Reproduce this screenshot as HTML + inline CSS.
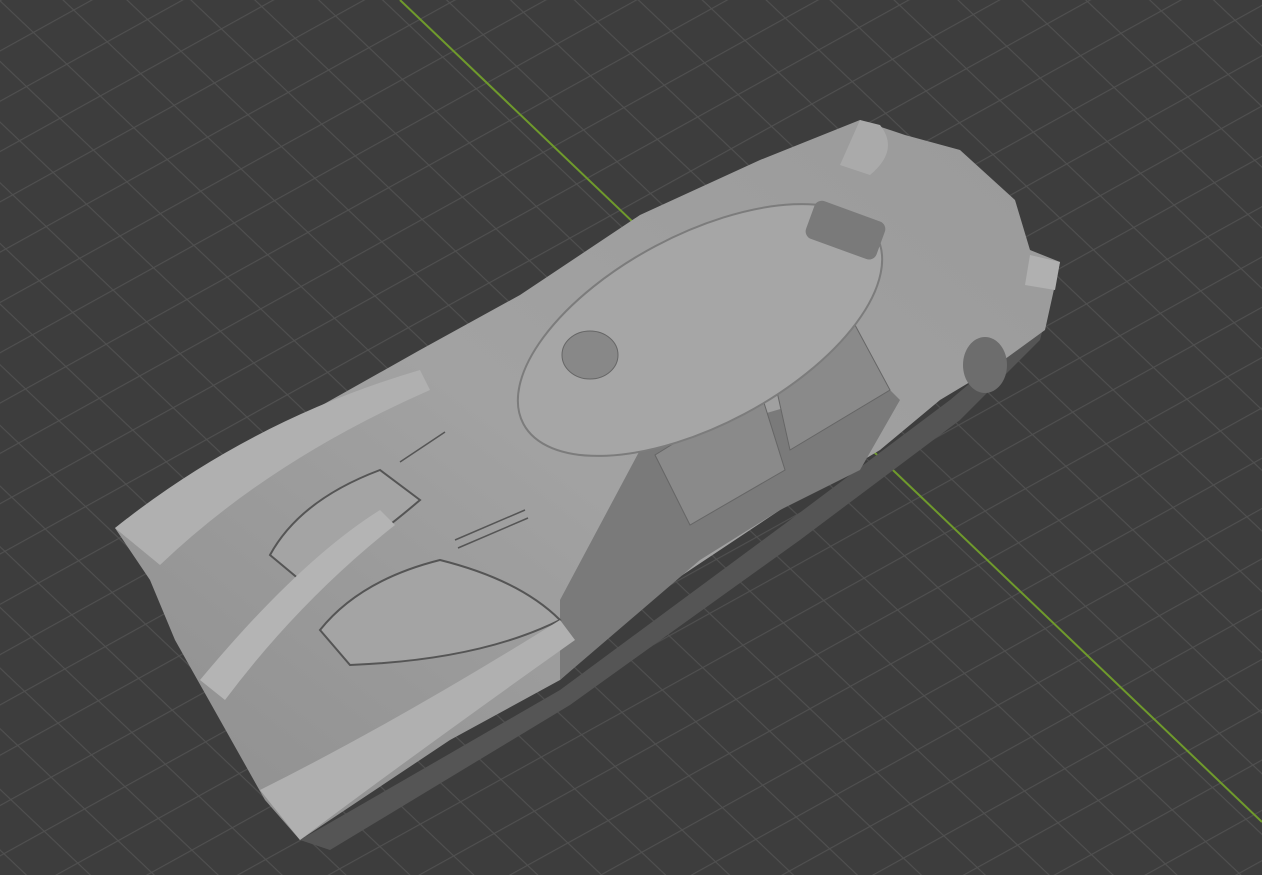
<!DOCTYPE html>
<html><head><meta charset="utf-8"><style>
html,body{margin:0;padding:0;background:#3d3d3d;width:1262px;height:875px;overflow:hidden}
</style></head><body>
<svg width="1262" height="875" viewBox="0 0 1262 875" xmlns="http://www.w3.org/2000/svg">
<defs>
<linearGradient id="body" x1="0" y1="1" x2="1" y2="0">
<stop offset="0" stop-color="#8e8e8e"/><stop offset="0.5" stop-color="#a2a2a2"/><stop offset="1" stop-color="#9a9a9a"/>
</linearGradient>
<pattern id="g1" width="44" height="44" patternUnits="userSpaceOnUse" patternTransform="rotate(43.5)">
<line x1="0" y1="0.5" x2="44" y2="0.5" stroke="#505050" stroke-width="1.2"/>
</pattern>
<pattern id="g2" width="44" height="44" patternUnits="userSpaceOnUse" patternTransform="rotate(-29)">
<line x1="0" y1="0.5" x2="44" y2="0.5" stroke="#505050" stroke-width="1.2"/>
</pattern>
</defs>
<rect width="1262" height="875" fill="#3d3d3d"/>
<rect width="1262" height="875" fill="url(#g1)"/>
<rect width="1262" height="875" fill="url(#g2)"/>
<line x1="400" y1="0" x2="1262" y2="822" stroke="#6f9a2c" stroke-width="2"/>
<polygon points="300,840 560,690 790,520 950,400 1045,320 1040,340 960,420 800,540 570,705 330,850" fill="#555"/>
<polygon points="115,528 260,440 420,350 520,295 640,215 760,160 860,120 905,135 960,150 1015,200 1030,250 1060,262 1045,330 990,370 940,400 880,450 780,510 660,590 560,680 450,740 360,800 300,840 265,800 220,720 175,640 150,580" fill="url(#body)"/>
<polygon points="560,600 640,450 880,380 900,400 860,470 780,510 700,560 560,680" fill="#7a7a7a"/>
<polygon points="655,455 760,390 785,470 690,525" fill="#8a8a8a" stroke="#666"/>
<polygon points="770,360 855,325 890,390 790,450" fill="#8a8a8a" stroke="#666"/>
<ellipse cx="700" cy="330" rx="200" ry="95" transform="rotate(-28 700 330)" fill="#a6a6a6" stroke="#7c7c7c" stroke-width="2"/>
<ellipse cx="590" cy="355" rx="28" ry="24" fill="#888" stroke="#666"/>
<path d="M270,555 Q300,500 380,470 L420,500 Q350,560 300,580 Z" fill="#a4a4a4" stroke="#555" stroke-width="2"/>
<path d="M320,630 Q360,580 440,560 Q520,580 560,620 Q480,660 350,665 Z" fill="#a4a4a4" stroke="#555" stroke-width="2"/>
<path d="M115,528 Q250,420 420,370 L430,390 Q270,460 160,565 Z" fill="#b0b0b0"/>
<path d="M260,790 Q400,720 560,620 L575,640 Q420,750 300,840 Z" fill="#b0b0b0"/>
<path d="M200,680 Q300,560 380,510 L395,525 Q300,600 225,700 Z" fill="#b4b4b4"/>
<path d="M860,120 L880,125 Q900,150 870,175 L840,165 Z" fill="#aaa"/>
<path d="M1030,255 L1060,262 L1055,290 L1025,285 Z" fill="#b0b0b0"/>
<rect x="808" y="210" width="75" height="40" rx="8" transform="rotate(20 845 230)" fill="#7a7a7a"/>
<g stroke="#555" stroke-width="1.5">
<line x1="455" y1="540" x2="525" y2="510"/><line x1="458" y1="548" x2="528" y2="518"/>
<line x1="400" y1="462" x2="445" y2="432"/>
</g>
<ellipse cx="985" cy="365" rx="22" ry="28" fill="#6d6d6d"/>
</svg>
</body></html>
